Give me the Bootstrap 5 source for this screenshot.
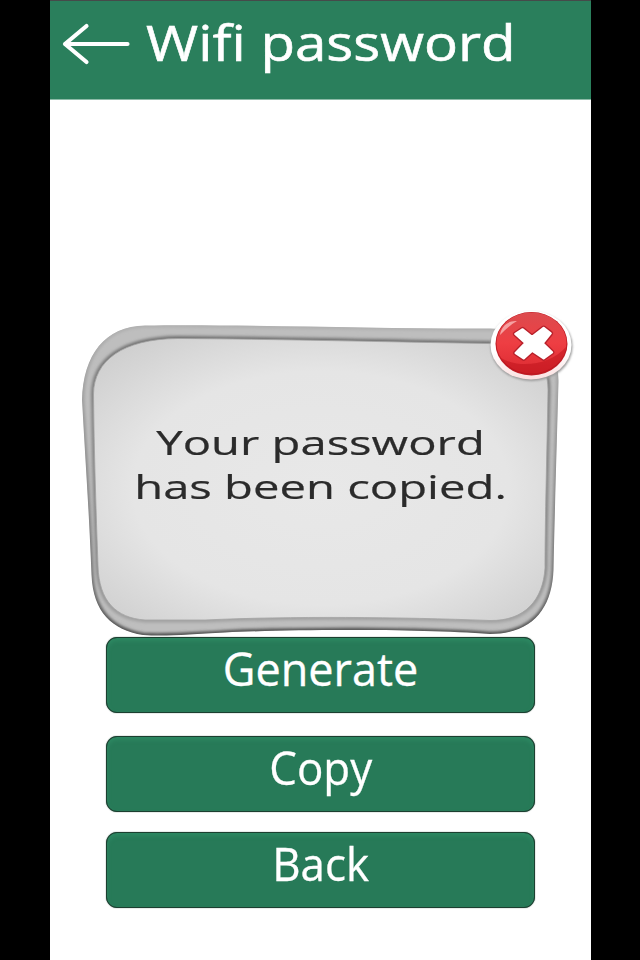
<!DOCTYPE html>
<html lang="en">
<head>
<meta charset="utf-8">
<meta name="viewport" content="width=device-width, initial-scale=1">
<title>Wifi password</title>
<link href="https://cdn.jsdelivr.net/npm/bootstrap@5.3.0/dist/css/bootstrap.min.css" rel="stylesheet">
<style>
  body { background: #000; font-family: "Open Sans", "Noto Sans", sans-serif; }
  .phone { width: 541px; height: 960px; margin-left: 50px; }
  .topbar { height: 100px; background: #2a7f5c; border-top: 1px solid #454a4a; border-bottom: 1px solid #8dbba8; padding-left: 12px; }
  .topbar svg { margin-top: 21px; }
  .title { font-size: 50px; line-height: 68px; margin: 7px 0 0 16px; transform: scaleX(1.13); transform-origin: 0 50%; white-space: nowrap; -webkit-text-stroke: .6px #fff; }
  .dialog-box { width: 500px; height: 330px; margin: 208px 0 0 27px; }
  .message { font-size: 32px; line-height: 43.6px; color: #2b2b2b; top: 113px; left: 0; width: 487px; transform: scaleX(1.475); white-space: nowrap; -webkit-text-stroke: .2px #2b2b2b; }
  .closer { top: 0; right: 0; width: 90px; height: 80px; }
  .actions { padding: 0 56px; margin-top: -1px; }
  .action { height: 76px; border: 1.5px solid #1c3f30; border-radius: 11px; background: #277a58; color: #fff; font-size: 45px; line-height: 62px; box-shadow: inset 0 3px 4px #2d8862, 0 0 1px #1c3f30; -webkit-text-stroke: .3px #fff; }
  .action:hover { background: #277a58; color: #fff; }
  .action span { display: inline-block; }
  .action .tight { transform: scaleX(.975); }
  .gap-a { margin-top: 23px; }
  .gap-b { margin-top: 20px; }
</style>
</head>
<body class="overflow-hidden">
<main class="phone bg-white d-flex flex-column overflow-hidden">
  <header class="topbar d-flex align-items-start flex-shrink-0 text-white">
    <svg width="68" height="44" viewBox="62 22 68 44" fill="none" stroke="#fff" stroke-width="4.200" stroke-linecap="round" stroke-linejoin="round" role="img" aria-label="Back">
      <path d="M86.500 26 65 44 86.500 62M65 44H127.500"/>
    </svg>
    <h1 class="title fw-normal">Wifi password</h1>
  </header>

  <section class="dialog-box position-relative flex-shrink-0" role="dialog" aria-label="Password copied">
    <svg class="d-block" width="500" height="330" viewBox="77 308 500 330">
      <defs>
        <radialGradient id="panel" cx=".5" cy=".53" r=".74">
          <stop offset="0" stop-color="#e8e8e8"/><stop offset=".56" stop-color="#e5e5e5"/><stop offset=".8" stop-color="#d5d5d5"/><stop offset="1" stop-color="#c8c8c8"/>
        </radialGradient>
        <linearGradient id="edge" x2="0" y2="1">
          <stop offset="0" stop-color="#b0b0b0"/><stop offset=".3" stop-color="#999"/><stop offset=".8" stop-color="#777"/><stop offset="1" stop-color="#4c4c4c"/>
        </linearGradient>
        <linearGradient id="lip" x2="0" y2="1">
          <stop offset="0" stop-color="#707070"/><stop offset=".25" stop-color="#858585"/><stop offset=".8" stop-color="#8b8b8b"/><stop offset="1" stop-color="#a2a2a2"/>
        </linearGradient>
        <filter id="soft" x="-5%" y="-5%" width="110%" height="110%"><feGaussianBlur stdDeviation="1.8"/></filter>
        <path id="outer" d="M145 325.500C240 324 380 329 490 328.500C536 330 559 345 558.500 382C557 440 555 500 553.500 570C552 608 533 634 490 634C420 629 300 629 225 632.500C190 634.500 165 636.500 143 635C112 630 93 612 91.500 575C89 510 85 455 82 400C83 355 105 326 145 325.500Z"/>
        <path id="inner" d="M178 338.500C270 339 390 342 488 343.500C528 345 548 358 548 390C547 450 545 520 545 568C543 600 525 621 490 620.500C400 617 290 616 205 620H145C116 618 99 601 98 566C96 510 94 450 93.500 394C94 361 122 339 178 338.500Z"/>
        <clipPath id="rim"><use href="#outer"/></clipPath>
      </defs>
      <g clip-path="url(#rim)">
        <use href="#outer" fill="#bebebe"/>
        <use href="#outer" fill="none" stroke="url(#edge)" stroke-width="4.500" filter="url(#soft)"/>
        <use href="#inner" fill="none" stroke="url(#lip)" stroke-width="5" filter="url(#soft)"/>
      </g>
      <use href="#inner" fill="url(#panel)" stroke="#a2a2a2" stroke-width=".8"/>
    </svg>
    <p class="message position-absolute text-center mb-0">Your password<br>has been copied.</p>
    <button class="closer position-absolute border-0 bg-transparent p-0" type="button" aria-label="Close">
      <svg class="d-block" width="90" height="80" viewBox="487 308 90 80">
        <defs>
          <linearGradient id="red" x2="0" y2="1"><stop offset="0" stop-color="#dc4b4e"/><stop offset=".5" stop-color="#ee3e43"/><stop offset="1" stop-color="#dc2a31"/></linearGradient>
          <linearGradient id="ring" x2="0" y2="1"><stop offset=".6" stop-color="#fff"/><stop offset="1" stop-color="#fbe0e0"/></linearGradient>
          <filter id="shade" x="-10%" y="-10%" width="120%" height="120%"><feGaussianBlur stdDeviation="1"/></filter>
        </defs>
        <ellipse cx="531.500" cy="346.500" rx="41" ry="34.500" fill="#999" filter="url(#shade)"/>
        <ellipse cx="531" cy="345" rx="40.500" ry="34.500" fill="url(#ring)"/>
        <ellipse cx="531.500" cy="343.700" rx="36" ry="31.700" fill="#c01c25"/>
        <ellipse cx="531.500" cy="343" rx="35" ry="30.500" fill="url(#red)"/>
        <path d="M501 358C520 369 550 365 566 347C564 363 549 374 531 374C518 374 506 368 501 358Z" fill="#b80d17" opacity=".45"/>
        <path d="M500 335C501 326 509 320 517 321C510 325 505 330 500 335Z" fill="#f9b1b1" opacity=".85"/>
        <g transform="translate(475 300) scale(.3333)" stroke-linejoin="round">
          <path d="M121 102 143 88 171 111 206 84 227 100 203 130 231 157 206 175 172 152 146 175 122 159 151 129Z" fill="#b8202a" stroke="#b8202a" stroke-width="15"/>
          <path d="M121 102 143 88 171 111 206 84 227 100 203 130 231 157 206 175 172 152 146 175 122 159 151 129Z" fill="#fff" stroke="#fff" stroke-width="7"/>
        </g>
      </svg>
    </button>
  </section>

  <nav class="actions d-flex flex-column" aria-label="Password actions">
    <button class="action btn p-0 d-flex justify-content-center align-items-start" type="button"><span>Generate</span></button>
    <button class="action gap-a btn p-0 d-flex justify-content-center align-items-start" type="button"><span class="tight">Copy</span></button>
    <button class="action gap-b btn p-0 d-flex justify-content-center align-items-start" type="button"><span class="tight">Back</span></button>
  </nav>
</main>
<script src="https://cdn.jsdelivr.net/npm/bootstrap@5.3.0/dist/js/bootstrap.bundle.min.js"></script>
</body>
</html>
